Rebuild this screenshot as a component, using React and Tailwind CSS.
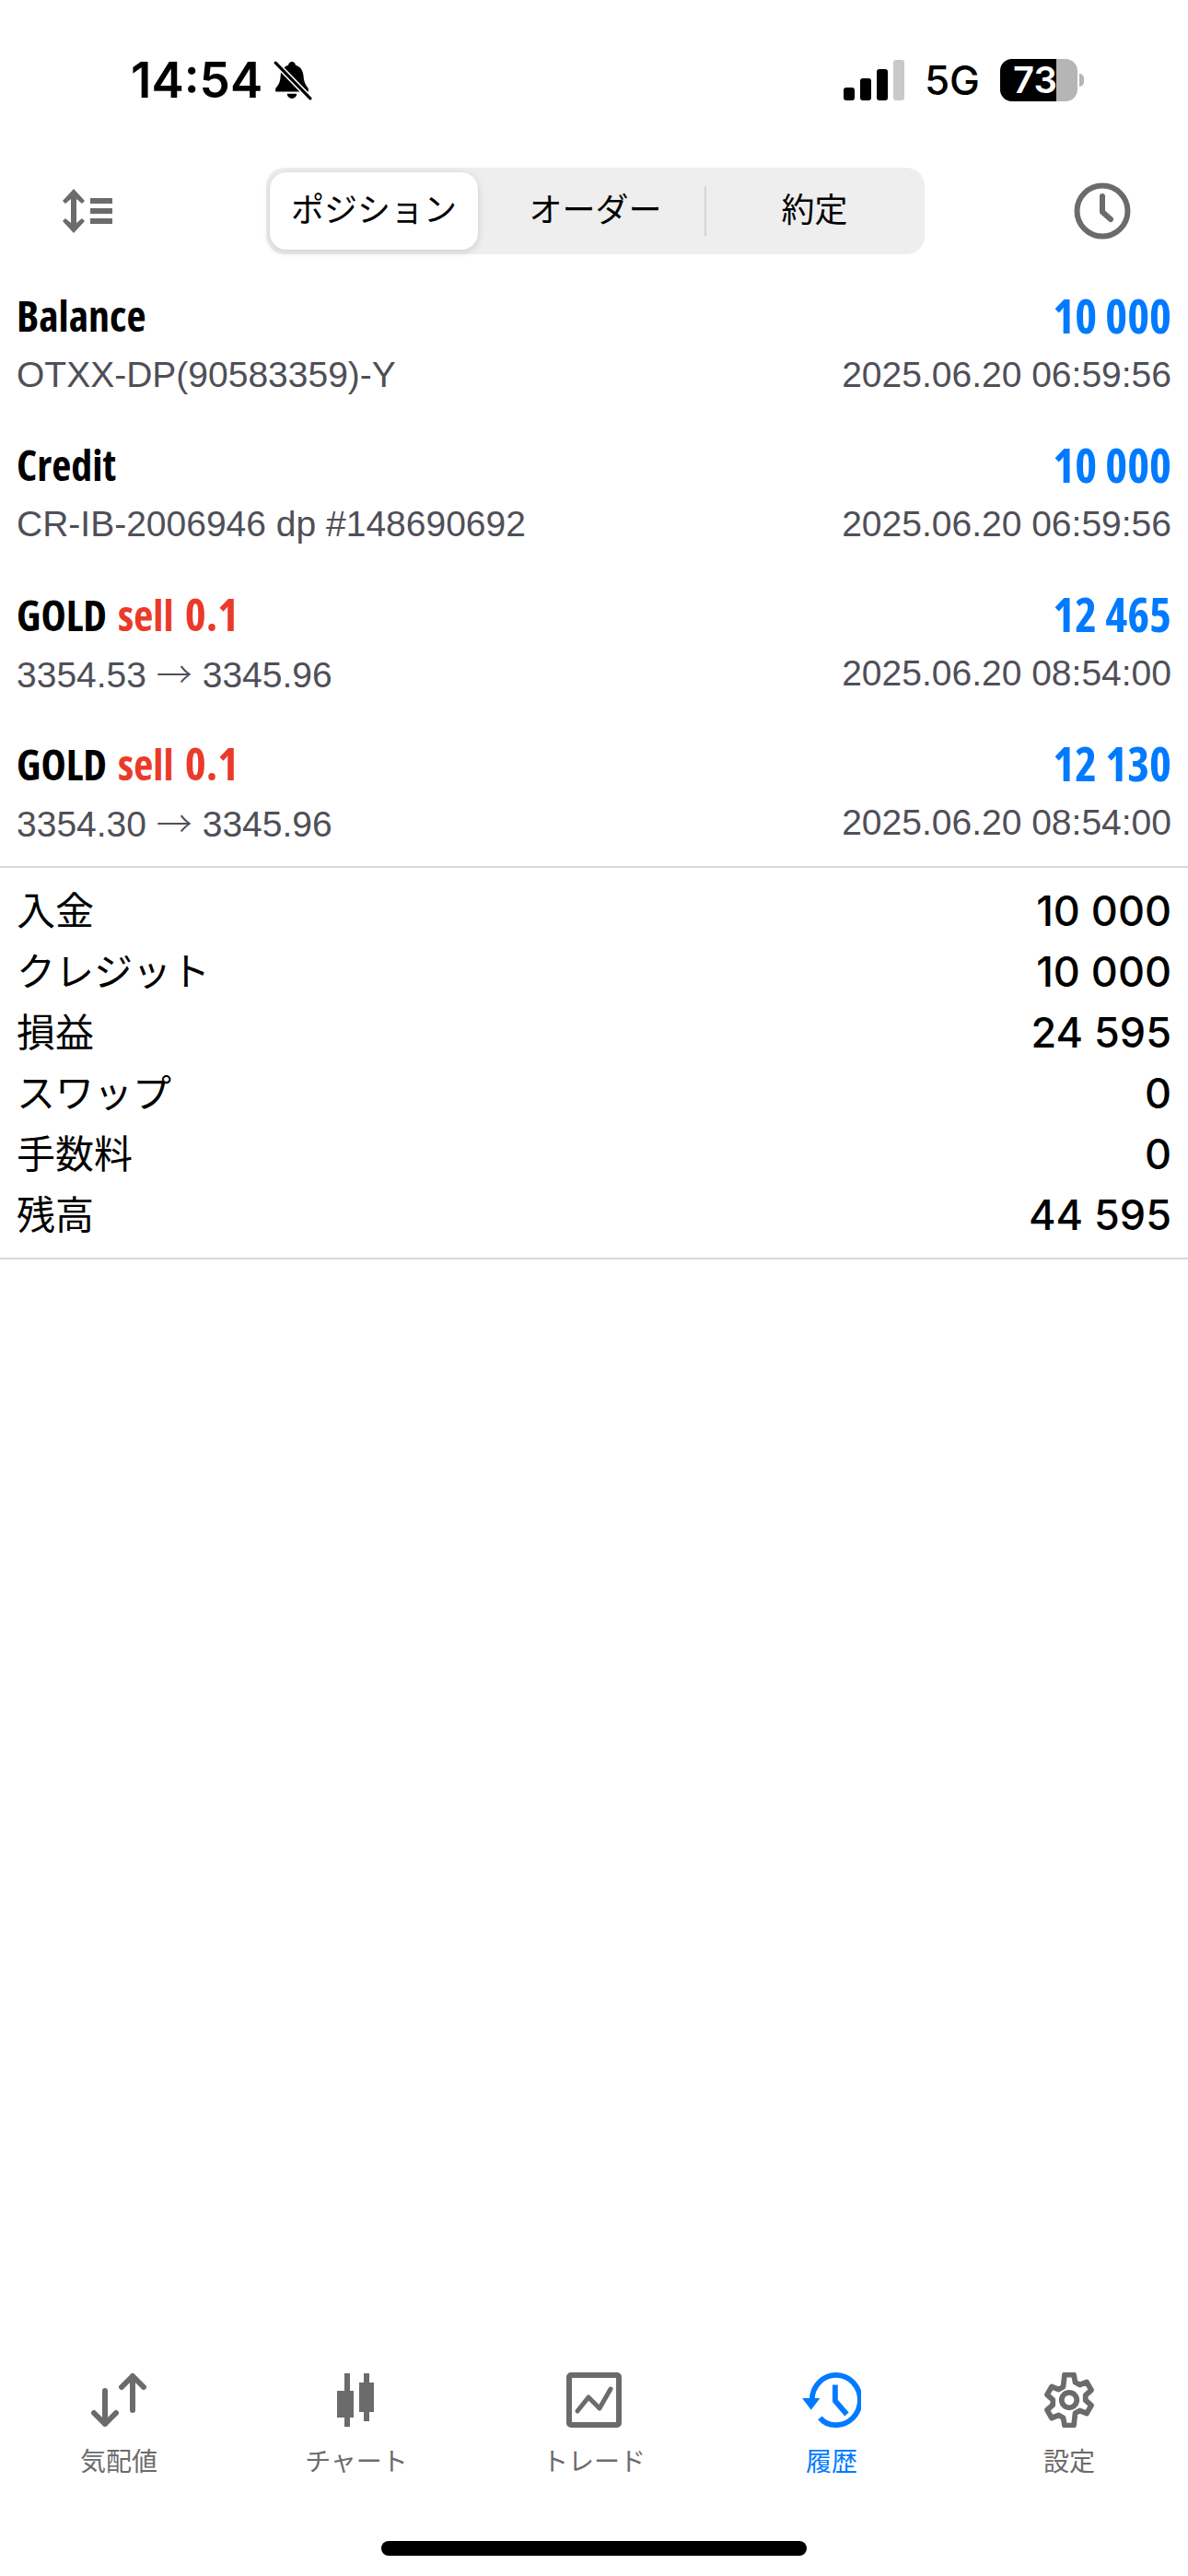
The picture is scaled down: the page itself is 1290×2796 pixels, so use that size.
const JP = "font-['Liberation_Sans','Noto_Sans_CJK_JP',sans-serif]";
const COND = "font-['Open_Sans',sans-serif] font-bold [font-stretch:75%]";

const trades = [
  { title: "Balance", sub: "OTXX-DP(90583359)-Y", value: "10 000", time: "2025.06.20 06:59:56" },
  { title: "Credit", sub: "CR-IB-2006946 dp #148690692", value: "10 000", time: "2025.06.20 06:59:56" },
  { title: "GOLD", lots: "0.1", from: "3354.53", to: "3345.96", value: "12 465", time: "2025.06.20 08:54:00" },
  { title: "GOLD", lots: "0.1", from: "3354.30", to: "3345.96", value: "12 130", time: "2025.06.20 08:54:00" },
];

const summary = [
  ["入金", "10 000"],
  ["クレジット", "10 000"],
  ["損益", "24 595"],
  ["スワップ", "0"],
  ["手数料", "0"],
  ["残高", "44 595"],
];

const MutedBell = () => (
  <svg width="44" height="44" viewBox="0 0 42 42">
    <path d="M21 2c2 0 3.500 1.500 3.800 3.500C30 7 32.500 11 33 17c.4 5 1.500 8.500 5 12.500V33H4v-3.500C7.500 26 9 22 9.200 17 9.500 11 12 7 17.200 5.500 17.500 3.500 19 2 21 2z" fill="#000" />
    <path d="M16 35h10a5 5 0 0 1-10 0z" fill="#000" />
    <path d="M4 3l36 37" stroke="#fff" strokeWidth="6" />
    <path d="M4 3l36 37" stroke="#000" strokeWidth="3" strokeLinecap="round" />
  </svg>
);

const StatusBar = () => (
  <div className="flex h-[168px] items-start justify-between pl-[142px] pr-[113px] pt-[62px]">
    <div className="flex items-center gap-[10px]">
      <span className="font-['Inter',sans-serif] text-[53px] leading-[50px] font-semibold text-black">14:54</span>
      <MutedBell />
    </div>
    <div className="flex items-center">
      <div className="flex items-end gap-[6px]">
        <div className="h-[14px] w-[12px] rounded-[3px] bg-black" />
        <div className="h-[24px] w-[12px] rounded-[3px] bg-black" />
        <div className="h-[34px] w-[12px] rounded-[3px] bg-black" />
        <div className="h-[44px] w-[12px] rounded-[3px] bg-[#c9c9c9]" />
      </div>
      <span className="ml-[22px] font-['Inter',sans-serif] text-[44px] leading-[50px] font-medium text-black">5G</span>
      <div className="ml-[22px] flex items-center">
        <div className="relative flex h-[46px] w-[84px] items-center rounded-[13px] bg-[#b5b5b5]">
          <div className="h-full w-[61px] rounded-l-[13px] bg-black" />
          <span className="absolute left-[14px] font-['Inter',sans-serif] text-[40px] leading-[46px] font-semibold text-white">73</span>
        </div>
        <div className="ml-[2px] h-[14px] w-[5px] rounded-r-full bg-[#b5b5b5]" />
      </div>
    </div>
  </div>
);

const Header = () => (
  <div className="flex h-[122px] items-center justify-between pl-[68px] pr-[62px]">
    <div className="w-[59px]">
      <svg width="54" height="48" viewBox="0 0 54 48" fill="#6b6b6b">
        <path d="M12 0l12 13-3 3-6-5v26l6-5 3 3-12 13L0 35l3-3 6 5V11l-6 5-3-3z" />
        <rect x="30" y="10" width="24" height="6" />
        <rect x="30" y="21" width="24" height="6" />
        <rect x="30" y="32" width="24" height="6" />
      </svg>
    </div>
    <div className={`flex h-[94px] w-[715px] items-center rounded-[20px] bg-[#eeeeee] p-[4px] text-[36px] text-black ${JP}`}>
      <div className="flex h-[84px] w-[226px] items-center justify-center rounded-[18px] bg-white shadow-[0_2px_8px_rgba(0,0,0,0.15)]">ポジション</div>
      <div className="flex h-full w-[246px] items-center justify-center pl-[9px]">オーダー</div>
      <div className="h-[54px] w-[2px] bg-[#d4d4d4]" />
      <div className="flex h-full flex-1 items-center justify-center pl-[2px]">約定</div>
    </div>
    <svg width="62" height="62" viewBox="0 0 62 62" fill="none" stroke="#6b6b6b" strokeWidth="6" strokeLinecap="round" strokeLinejoin="round">
      <circle cx="31" cy="31" r="27.500" />
      <path d="M31 15v17l9 8" />
    </svg>
  </div>
);

const TradeRow = ({ title, lots, sub, from, to, value, time }) => (
  <div className="flex flex-col">
    <div className="flex h-[65px] items-center justify-between">
      <span className={`text-[46px] leading-[65px] text-black ${COND}`}>
        {title}
        {lots && (
          <span className="ml-[12px] text-[#ea3a2a]">
            sell <span className="ml-[4px] text-[49px]">{lots}</span>
          </span>
        )}
      </span>
      <span className={`text-[51px] leading-[65px] text-[#007aff] ${COND}`}>{value}</span>
    </div>
    <div className="flex h-[65px] items-center justify-between font-['Liberation_Sans',sans-serif] text-[39px] text-[#4f4f58]">
      {lots ? (
        <span>
          {from} <span className="font-['Noto_Sans_CJK_JP',sans-serif] font-light">→</span> {to}
        </span>
      ) : (
        <span>{sub}</span>
      )}
      <span>{time}</span>
    </div>
  </div>
);

const NavItem = ({ label, active, children }) => (
  <div className={`flex flex-1 flex-col items-center ${active ? "text-[#007aff]" : "text-[#6b6b6b]"}`}>
    <div className="flex h-[62px] items-center justify-center">{children}</div>
    <span className={`mt-[19px] text-[28px] leading-[36px] ${JP}`}>{label}</span>
  </div>
);

const BottomNav = () => (
  <div className="flex">
    <NavItem label="気配値">
      <svg width="62" height="58" viewBox="0 0 62 58" fill="none" stroke="currentColor" strokeWidth="6" strokeLinecap="round" strokeLinejoin="round">
        <path d="M16 19v36M4 43l12 12 12-12" />
        <path d="M46 3v37M34 15L46 3l12 12" />
      </svg>
    </NavItem>
    <NavItem label="チャート">
      <svg width="43" height="58" viewBox="0 0 43 58" fill="currentColor">
        <rect x="8" y="0" width="6" height="58" />
        <rect x="0" y="19" width="18" height="29" />
        <rect x="29" y="0" width="6" height="52" />
        <path d="M24 10h16v32H24zM29 15v22h6V15z" fillRule="evenodd" />
      </svg>
    </NavItem>
    <NavItem label="トレード">
      <svg width="60" height="60" viewBox="0 0 60 60" fill="none" stroke="currentColor" strokeWidth="6" strokeLinecap="round" strokeLinejoin="round">
        <rect x="3" y="3" width="54" height="54" rx="2" />
        <path d="M12 42L24 27L36 39L48 18" strokeWidth="5" />
      </svg>
    </NavItem>
    <NavItem label="履歴" active>
      <svg width="64" height="60" viewBox="0 0 66 62" fill="none" stroke="currentColor" strokeWidth="6">
        <path d="M11 31A27 28 0 1 1 37 59c-7 0-13-3-17-8" />
        <path d="M37 14v18l13 15" />
        <path d="M0 29h20L10 42z" fill="currentColor" stroke="none" />
      </svg>
    </NavItem>
    <NavItem label="設定">
      <svg width="60" height="60" viewBox="0 0 24 24" fill="none" stroke="currentColor" strokeWidth="2.300" strokeLinejoin="round">
        <path d="M10 1h4l.6 3.300 2 1.100 3-1.200 2 3.500-2.500 2.200v2.200l2.500 2.200-2 3.500-3-1.200-2 1.100L14 23h-4l-.6-3.300-2-1.100-3 1.200-2-3.500 2.500-2.200v-2.200L2.400 9.700l2-3.500 3 1.200 2-1.100z" />
        <circle cx="12" cy="12" r="3.300" />
      </svg>
    </NavItem>
  </div>
);

export default function App() {
  return (
    <div className="flex h-[2796px] w-[1290px] flex-col bg-white">
      <StatusBar />
      <Header />
      <div className="mt-[20px] flex flex-col gap-[32px] px-[18px] pb-[14px]">
        {trades.map((t, i) => (
          <TradeRow key={i} {...t} />
        ))}
      </div>
      <div className="h-[2px] bg-[#d9d9d9]" />
      <div className="flex flex-col border-b-2 border-[#d9d9d9] px-[18px] pt-[14px] pb-[13px]">
        {summary.map(([label, num]) => (
          <div key={label} className="flex h-[66px] items-center justify-between text-[42px] text-black">
            <span className={JP}>{label}</span>
            <span className="font-['Inter',sans-serif] text-[45px] font-medium">{num}</span>
          </div>
        ))}
      </div>
      <div className="flex-1" />
      <BottomNav />
      <div className="flex h-[105px] items-end justify-center pb-[22px]">
        <div className="h-[16px] w-[462px] rounded-full bg-black" />
      </div>
    </div>
  );
}
